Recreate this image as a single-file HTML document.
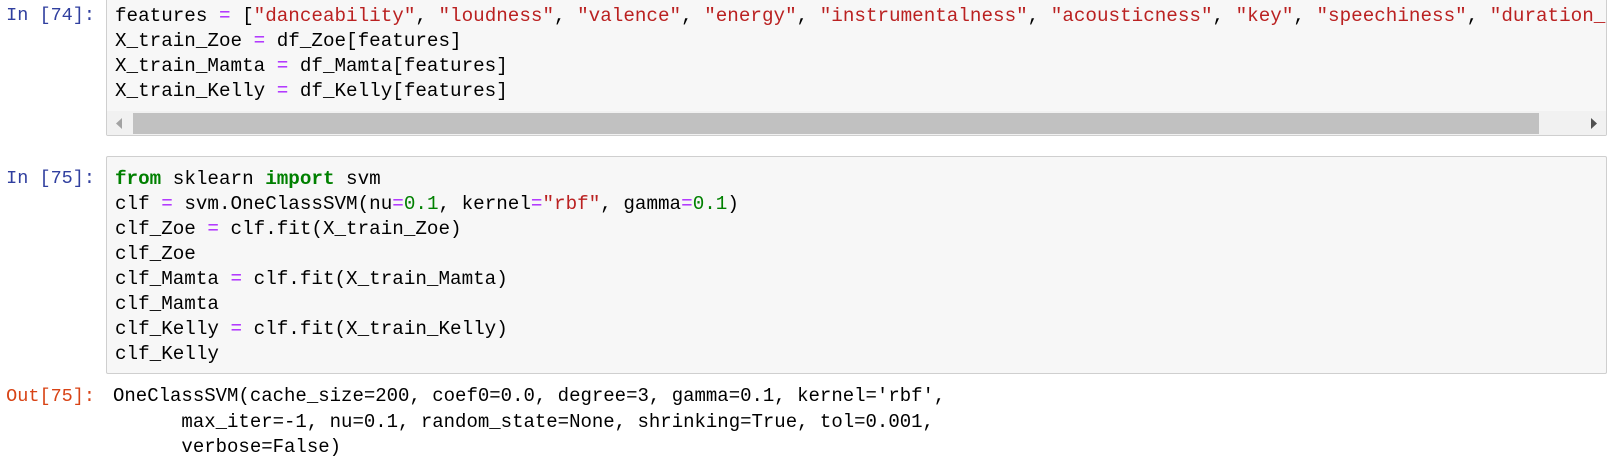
<!DOCTYPE html>
<html><head><meta charset="utf-8"><style>
body{margin:0;width:1620px;height:464px;background:#fff;position:relative;overflow:hidden;font-family:"Liberation Mono",monospace;font-size:19.25px;}
.p{position:absolute;width:95px;text-align:right;line-height:25px;white-space:pre;font-size:18.5px;}
.in{color:#303F9F}.out{color:#D84315}
.box{position:absolute;left:106px;width:1499px;background:#f7f7f7;border:1px solid #cfcfcf;border-radius:2px;overflow:hidden;}
pre{margin:0;font:inherit;line-height:25px;padding-left:8px;color:#000;white-space:pre;}
.s{color:#BA2121}.k{color:#008000;font-weight:bold}.n{color:#008000}.o{color:#AA22FF}
.sb{position:absolute;left:0;right:0;top:117px;height:24px;background:#f1f1f1;}
.th{position:absolute;left:26px;width:1406px;top:2px;height:21px;background:#c1c1c1;}
</style></head><body>
<div class="p in" style="top:3px">In [74]:</div>
<div class="box" style="top:-7px;height:141px;">
<pre style="padding-top:9.5px">features <span class="o">=</span> [<span class="s">"danceability"</span>, <span class="s">"loudness"</span>, <span class="s">"valence"</span>, <span class="s">"energy"</span>, <span class="s">"instrumentalness"</span>, <span class="s">"acousticness"</span>, <span class="s">"key"</span>, <span class="s">"speechiness"</span>, <span class="s">"duration_ms"</span>]
X_train_Zoe <span class="o">=</span> df_Zoe[features]
X_train_Mamta <span class="o">=</span> df_Mamta[features]
X_train_Kelly <span class="o">=</span> df_Kelly[features]</pre>
<div class="sb"><div class="th"></div>
<svg style="position:absolute;left:8px;top:7px" width="8" height="11"><path d="M7 0L1 5.5L7 11Z" fill="#a3a3a3"/></svg>
<svg style="position:absolute;left:1483px;top:7px" width="8" height="11"><path d="M1 0L7 5.5L1 11Z" fill="#505050"/></svg>
</div>
</div>
<div class="p in" style="top:166px">In [75]:</div>
<div class="box" style="top:156px;height:216px;">
<pre style="padding-top:9.5px"><span class="k">from</span> sklearn <span class="k">import</span> svm
clf <span class="o">=</span> svm.OneClassSVM(nu<span class="o">=</span><span class="n">0.1</span>, kernel<span class="o">=</span><span class="s">"rbf"</span>, gamma<span class="o">=</span><span class="n">0.1</span>)
clf_Zoe <span class="o">=</span> clf.fit(X_train_Zoe)
clf_Zoe
clf_Mamta <span class="o">=</span> clf.fit(X_train_Mamta)
clf_Mamta
clf_Kelly <span class="o">=</span> clf.fit(X_train_Kelly)
clf_Kelly</pre>
</div>
<div class="p out" style="top:384px">Out[75]:</div>
<pre style="position:absolute;left:105px;top:384px;line-height:25.5px;font-size:19px">OneClassSVM(cache_size=200, coef0=0.0, degree=3, gamma=0.1, kernel='rbf',
      max_iter=-1, nu=0.1, random_state=None, shrinking=True, tol=0.001,
      verbose=False)</pre>
</body></html>
